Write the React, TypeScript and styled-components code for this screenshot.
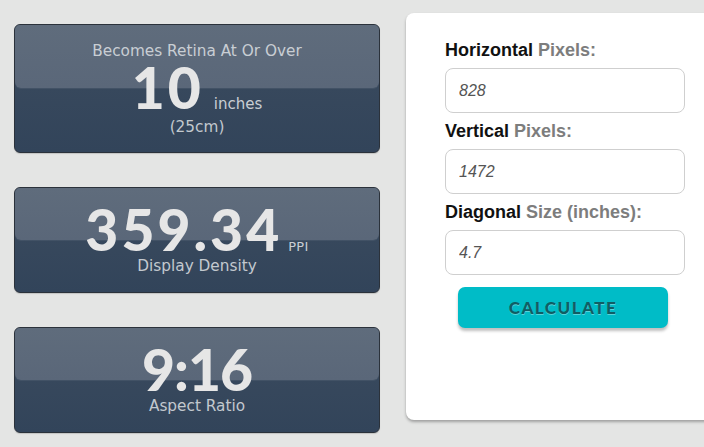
import React from 'react';
import styled, {createGlobalStyle} from "styled-components";

const GlobalStyle = createGlobalStyle`
  html, body {
    margin: 0;
    padding: 0;
    background: #e4e5e4;
    overflow: hidden;
  }
`

const results = [
    {value: '10', unit: 'inches', title: 'Becomes Retina At Or Over', note: '(25cm)', spacing: 3},
    {value: '359.34', unit: 'PPI', small: true, note: 'Display Density', spacing: 3},
    {value: '9:16', note: 'Aspect Ratio', spacing: -1},
];

const fields = [
    {strong: 'Horizontal', rest: 'Pixels:', value: '828'},
    {strong: 'Vertical', rest: 'Pixels:', value: '1472'},
    {strong: 'Diagonal', rest: 'Size (inches):', value: '4.7'},
];

export default function App() {
    return (
        <>
            <GlobalStyle/>
            <Page>
                <Results>
                    {results.map((r, i) => (
                        <Card key={i} $tall={!!r.title}>
                            {r.title && <Title>{r.title}</Title>}
                            <ValueRow>
                                <Value $spacing={r.spacing}>{r.value}</Value>
                                {r.unit && <Unit $small={r.small}>{r.unit}</Unit>}
                            </ValueRow>
                            <Note $tall={!!r.title}>{r.note}</Note>
                        </Card>
                    ))}
                </Results>
                <Panel>
                    {fields.map((f, i) => (
                        <Field key={i}>
                            <Label><b>{f.strong}</b> <span>{f.rest}</span></Label>
                            <Input defaultValue={f.value}/>
                        </Field>
                    ))}
                    <Button>CALCULATE</Button>
                </Panel>
            </Page>
        </>
    );
}

const Page = styled.div`
  display: flex;
  align-items: flex-start;
  width: 730px;
  height: 447px;
`

const Results = styled.div`
  display: flex;
  flex-direction: column;
  gap: 34px;
  width: 366px;
  margin: 24px 0 0 14px;
`

const Card = styled.div<{ $tall?: boolean }>`
  position: relative;
  box-sizing: border-box;
  height: ${p => p.$tall ? '129px' : '106px'};
  padding-top: ${p => p.$tall ? '19px' : '13px'};
  display: flex;
  flex-direction: column;
  align-items: center;
  border-radius: 6px;
  border: 1px solid #2b323b;
  background: linear-gradient(#3c4c5f, #32445a);
  box-shadow: 0 1px 1px rgba(0, 0, 0, 0.15);
  overflow: hidden;

  &::before {
    content: '';
    position: absolute;
    left: 0;
    right: 0;
    top: 0;
    height: ${p => p.$tall ? '63px' : '52px'};
    background: linear-gradient(#5f6c7c, #5a6779);
    border-radius: 0 0 6px 6px;
    box-shadow: 0 1px 0 rgba(255, 255, 255, 0.06);
  }

  & > * {
    position: relative;
  }
`

const Title = styled.div`
  font-family: "DejaVu Sans", Verdana, sans-serif;
  font-size: 15.3px;
  line-height: 15px;
  color: #c9ced4;
`

const ValueRow = styled.div`
  display: flex;
  align-items: baseline;
  gap: 6px;
`

const Value = styled.span<{ $spacing: number }>`
  font-family: Lato, "Open Sans", sans-serif;
  font-weight: 900;
  font-size: 57px;
  line-height: 56px;
  letter-spacing: ${p => p.$spacing}px;
  color: #e6e6e6;
`

const Unit = styled.span<{ $small?: boolean }>`
  font-family: "DejaVu Sans", Verdana, sans-serif;
  font-size: ${p => p.$small ? '13px' : '15px'};
  margin-left: ${p => p.$small ? '0' : '4px'};
  letter-spacing: ${p => p.$small ? '0.3px' : '0'};
  color: #c9ced4;
`

const Note = styled.div<{ $tall?: boolean }>`
  margin-top: ${p => p.$tall ? '3px' : '0'};
  font-family: "DejaVu Sans", Verdana, sans-serif;
  font-size: 15.3px;
  line-height: 18px;
  color: #c3c9cf;
`

const Panel = styled.div`
  box-sizing: border-box;
  width: 320px;
  height: 407px;
  margin: 13px 0 0 26px;
  padding: 26px 0 0 39px;
  background: #fff;
  border-radius: 8px;
  box-shadow: 0 2px 3px rgba(0, 0, 0, 0.3);
  display: flex;
  flex-direction: column;
`

const Field = styled.div`
  display: flex;
  flex-direction: column;
  gap: 7px;
  margin-bottom: 7px;
`

const Label = styled.div`
  font-family: "Liberation Sans", Arial, sans-serif;
  font-size: 18px;
  line-height: 22px;
  font-weight: bold;
  color: #111;

  span {
    color: #7d7d7d;
  }
`

const Input = styled.input`
  box-sizing: border-box;
  width: 240px;
  height: 45px;
  padding: 0 13px;
  border: 1px solid #cfcfcf;
  border-radius: 8px;
  font-family: "Liberation Sans", Arial, sans-serif;
  font-size: 16px;
  font-style: italic;
  color: #555;
  outline: none;
`

const Button = styled.button`
  width: 210px;
  height: 41px;
  margin: 5px 0 0 13px;
  border: none;
  border-radius: 7px;
  background: #00bcc7;
  box-shadow: 0 3px 3px rgba(0, 0, 0, 0.25);
  font-family: Lato, "Open Sans", sans-serif;
  font-weight: 900;
  font-size: 17px;
  letter-spacing: 1.5px;
  color: #105d64;
  text-shadow: 0 1px 0 rgba(255, 255, 255, 0.35);
`
